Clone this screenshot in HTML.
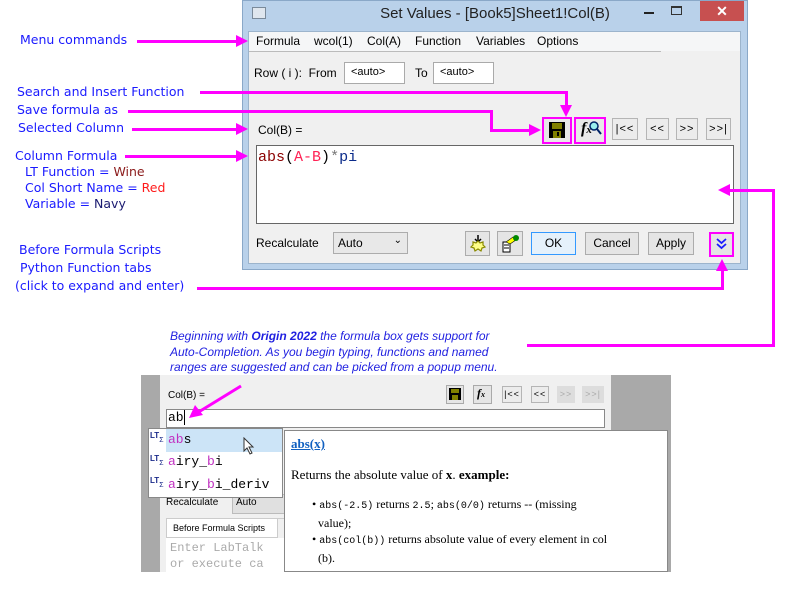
<!DOCTYPE html>
<html><head><meta charset="utf-8"><style>
*{margin:0;padding:0;box-sizing:border-box}
body{width:799px;height:590px;background:#fff;position:relative;overflow:hidden;font-family:"Liberation Sans",sans-serif;font-size:12px;color:#000}
.a{position:absolute}
.lbl{position:absolute;font-family:"DejaVu Sans",Verdana,sans-serif;font-size:12.5px;color:#1a1aff;white-space:nowrap;line-height:14px}
.m{position:absolute;background:#ff00ff}
.btn{position:absolute;background:#e5e5e5;border:1px solid #acacac;text-align:center;font-size:12px;line-height:20px}
.nav{position:absolute;background:#ececec;border:1px solid #b5b5b5;font-family:"Liberation Sans",sans-serif;font-size:11px;text-align:center;line-height:20px;color:#000;letter-spacing:1px}
.mono{font-family:"Liberation Mono",monospace}
.cap{position:absolute;font-style:italic;color:#1f1fe0;font-size:12px;line-height:13px;white-space:nowrap;left:170px}
.tri{position:absolute;width:0;height:0}
</style></head><body>

<!-- main dialog -->
<div class="a" style="left:242px;top:0;width:506px;height:270px;background:#b9d1ea;border:1px solid #8aa8c8"></div>
<div class="a" style="left:252px;top:7px;width:14px;height:12px;background:#dfe6ee;border:1px solid #7a8a9a"></div>
<div class="a" style="left:242px;top:5px;width:506px;text-align:center;font-size:15px;color:#222">Set Values - [Book5]Sheet1!Col(B)</div>
<div class="a" style="left:644px;top:12px;width:10px;height:2px;background:#222"></div>
<div class="a" style="left:671px;top:6px;width:11px;height:9px;border:1px solid #333;border-top-width:2px"></div>
<div class="a" style="left:700px;top:1px;width:44px;height:20px;background:#c75050;color:#fff;text-align:center;font-size:14px;line-height:20px;font-weight:bold">✕</div>
<div class="a" style="left:248px;top:31px;width:493px;height:233px;background:#f0f0f0;border:1px solid #9cb4cc"></div>
<div class="a" style="left:249px;top:32px;width:491px;height:19px;background:#f5f6f7"></div>
<div class="a" style="left:249px;top:51px;width:412px;height:1px;background:#bbb"></div>
<div class="a" style="left:256px;top:34px">Formula</div>
<div class="a" style="left:314px;top:34px">wcol(1)</div>
<div class="a" style="left:367px;top:34px">Col(A)</div>
<div class="a" style="left:415px;top:34px">Function</div>
<div class="a" style="left:476px;top:34px">Variables</div>
<div class="a" style="left:537px;top:34px">Options</div>
<div class="a" style="left:254px;top:66px">Row ( i ):&nbsp; From</div>
<div class="a" style="left:344px;top:62px;width:61px;height:22px;background:#fff;border:1px solid #aaa;padding:3px 0 0 6px;font-size:11px">&lt;auto&gt;</div>
<div class="a" style="left:415px;top:66px">To</div>
<div class="a" style="left:433px;top:62px;width:61px;height:22px;background:#fff;border:1px solid #aaa;padding:3px 0 0 6px;font-size:11px">&lt;auto&gt;</div>
<div class="a" style="left:258px;top:123px">Col(B) =</div>

<!-- save/fx buttons -->
<div class="a" style="left:542px;top:117px;width:30px;height:27px;border:2px solid #ff00ff;background:#e8e8e8"></div>
<svg class="a" style="left:549px;top:122px" width="16" height="16"><rect x="0" y="0" width="16" height="16" fill="#000"/><rect x="3" y="1" width="10" height="6" fill="#808000"/><rect x="4" y="9" width="8" height="7" fill="#808000"/><rect x="8" y="10" width="2" height="4" fill="#000"/></svg>
<div class="a" style="left:574px;top:117px;width:32px;height:27px;border:2px solid #ff00ff;background:#e8e8e8"></div>
<div class="a" style="left:581px;top:120px;font-family:'Liberation Serif',serif;font-style:italic;font-size:16px;font-weight:bold">f<span style="font-size:11px">x</span></div>
<svg class="a" style="left:588px;top:120px" width="14" height="16"><circle cx="6" cy="6" r="4" fill="#9ee" stroke="#026" stroke-width="1.5"/><line x1="9" y1="9" x2="13" y2="14" stroke="#026" stroke-width="2"/></svg>
<div class="nav" style="left:612px;top:118px;width:26px;height:22px">|&lt;&lt;</div>
<div class="nav" style="left:646px;top:118px;width:23px;height:22px">&lt;&lt;</div>
<div class="nav" style="left:676px;top:118px;width:22px;height:22px">&gt;&gt;</div>
<div class="nav" style="left:706px;top:118px;width:25px;height:22px">&gt;&gt;|</div>

<div class="a" style="left:256px;top:145px;width:478px;height:79px;background:#fff;border:1px solid #666"></div>
<div class="a mono" style="left:258px;top:149px;font-size:15px"><span style="color:#8b0000">abs</span>(<span style="color:#ff2255">A-B</span>)<span style="color:#777">*</span><span style="color:#0a2a8a">pi</span></div>

<div class="a" style="left:256px;top:236px">Recalculate</div>
<div class="a" style="left:333px;top:232px;width:75px;height:22px;background:#e8e8e8;border:1px solid #acacac;padding:3px 0 0 4px">Auto<span style="position:absolute;right:5px;top:2px;font-size:10px">&#8964;</span></div>
<div class="btn" style="left:465px;top:231px;width:25px;height:25px"></div>
<svg class="a" style="left:469px;top:234px" width="18" height="18"><path d="M9 1 V8 M6 5 L9 8 L12 5" stroke="#000" stroke-width="1.5" fill="none"/><path d="M9 7 L11 9 L14 8 L14 11 L16 13 L13 14 L12 17 L9 15 L6 17 L5 14 L2 13 L4 11 L4 8 L7 9 Z" fill="#ff8" stroke="#8a8a00" stroke-width="1.2"/></svg>
<div class="btn" style="left:497px;top:231px;width:26px;height:25px"></div>
<svg class="a" style="left:501px;top:234px" width="20" height="20"><rect x="2" y="8" width="7" height="10" fill="#fff" stroke="#000"/><line x1="3" y1="11" x2="8" y2="11" stroke="#000"/><line x1="3" y1="14" x2="8" y2="14" stroke="#000"/><path d="M5 8 L12 3 L15 6 L9 10Z" fill="#ff0" stroke="#000" stroke-width="0.6"/><circle cx="15" cy="4" r="3" fill="#080"/></svg>
<div class="btn" style="left:531px;top:232px;width:45px;height:23px;border-color:#3399ff;background:#e5f1fb">OK</div>
<div class="btn" style="left:585px;top:232px;width:54px;height:23px">Cancel</div>
<div class="btn" style="left:648px;top:232px;width:46px;height:23px">Apply</div>
<div class="a" style="left:709px;top:232px;width:25px;height:25px;border:2px solid #ff00ff;background:#e5e5e5"></div>
<svg class="a" style="left:716px;top:238px" width="11" height="13"><path d="M1 1 L5.5 5 L10 1 M1 6 L5.5 10 L10 6" stroke="#1a1aff" stroke-width="1.8" fill="none"/></svg>

<!-- left labels -->
<div class="lbl" style="left:20px;top:33px">Menu commands</div>
<div class="lbl" style="left:17px;top:85px">Search and Insert Function</div>
<div class="lbl" style="left:17px;top:103px">Save formula as</div>
<div class="lbl" style="left:18px;top:121px">Selected Column</div>
<div class="lbl" style="left:15px;top:149px">Column Formula</div>
<div class="lbl" style="left:25px;top:165px">LT Function = <span style="color:#8b1a1a">Wine</span></div>
<div class="lbl" style="left:25px;top:181px">Col Short Name = <span style="color:#ff1a1a">Red</span></div>
<div class="lbl" style="left:25px;top:197px">Variable = <span style="color:#1a1a70">Navy</span></div>
<div class="lbl" style="left:19px;top:243px">Before Formula Scripts</div>
<div class="lbl" style="left:20px;top:261px">Python Function tabs</div>
<div class="lbl" style="left:15px;top:279px">(click to expand and enter)</div>

<!-- magenta arrows -->
<div class="m" style="left:137px;top:40px;width:100px;height:3px"></div>
<div class="tri" style="left:236px;top:35px;border-left:12px solid #f0f;border-top:6px solid transparent;border-bottom:6px solid transparent"></div>
<div class="m" style="left:200px;top:91px;width:367px;height:3px"></div>
<div class="m" style="left:565px;top:91px;width:3px;height:16px"></div>
<div class="tri" style="left:560px;top:105px;border-top:12px solid #f0f;border-left:6px solid transparent;border-right:6px solid transparent"></div>
<div class="m" style="left:128px;top:110px;width:365px;height:3px"></div>
<div class="m" style="left:490px;top:110px;width:3px;height:22px"></div>
<div class="m" style="left:490px;top:129px;width:40px;height:3px"></div>
<div class="tri" style="left:529px;top:124px;border-left:12px solid #f0f;border-top:6px solid transparent;border-bottom:6px solid transparent"></div>
<div class="m" style="left:132px;top:128px;width:104px;height:3px"></div>
<div class="tri" style="left:236px;top:123px;border-left:12px solid #f0f;border-top:6px solid transparent;border-bottom:6px solid transparent"></div>
<div class="m" style="left:125px;top:155px;width:111px;height:3px"></div>
<div class="tri" style="left:236px;top:150px;border-left:12px solid #f0f;border-top:6px solid transparent;border-bottom:6px solid transparent"></div>
<div class="m" style="left:730px;top:189px;width:45px;height:3px"></div>
<div class="tri" style="left:718px;top:184px;border-right:12px solid #f0f;border-top:6px solid transparent;border-bottom:6px solid transparent"></div>
<div class="m" style="left:772px;top:189px;width:3px;height:158px"></div>
<div class="m" style="left:527px;top:344px;width:248px;height:3px"></div>
<div class="m" style="left:197px;top:287px;width:527px;height:3px"></div>
<div class="m" style="left:721px;top:270px;width:3px;height:20px"></div>
<div class="tri" style="left:716px;top:259px;border-bottom:12px solid #f0f;border-left:6px solid transparent;border-right:6px solid transparent"></div>

<!-- caption -->
<div class="cap" style="top:330px">Beginning with <b>Origin 2022</b> the formula box gets support for</div>
<div class="cap" style="top:346px">Auto-Completion. As you begin typing, functions and named</div>
<div class="cap" style="top:361px">ranges are suggested and can be picked from a popup menu.</div>

<!-- bottom screenshot -->
<div class="a" style="left:141px;top:375px;width:530px;height:197px;background:#a9a9a9"></div>
<div class="a" style="left:160px;top:375px;width:451px;height:197px;background:#f0f0f0"></div>
<div class="a" style="left:168px;top:390px;font-size:10px">Col(B) =</div>
<div class="a" style="left:446px;top:385px;width:18px;height:19px;background:#e5e5e5;border:1px solid #aaa"></div>
<svg class="a" style="left:449px;top:388px" width="12" height="12"><rect width="12" height="12" fill="#000"/><rect x="2" y="1" width="8" height="4" fill="#808000"/><rect x="3" y="7" width="6" height="5" fill="#808000"/></svg>
<div class="a" style="left:473px;top:385px;width:19px;height:19px;background:#e5e5e5;border:1px solid #aaa;font-family:'Liberation Serif',serif;font-style:italic;font-weight:bold;font-size:12px;padding-left:3px">f<span style="font-size:8px">x</span></div>
<div class="nav" style="left:502px;top:386px;width:20px;height:17px;font-size:9px;line-height:15px">|&lt;&lt;</div>
<div class="nav" style="left:531px;top:386px;width:18px;height:17px;font-size:9px;line-height:15px">&lt;&lt;</div>
<div class="nav" style="left:557px;top:386px;width:18px;height:17px;font-size:9px;line-height:15px;color:#aaa;background:#ddd;border-color:#ddd">&gt;&gt;</div>
<div class="nav" style="left:582px;top:386px;width:22px;height:17px;font-size:9px;line-height:15px;color:#aaa;background:#ddd;border-color:#ddd">&gt;&gt;|</div>
<div class="a" style="left:166px;top:409px;width:439px;height:19px;background:#fff;border:1px solid #888"></div>
<div class="a mono" style="left:168px;top:410px;font-size:13px">ab<span style="border-left:1px solid #000"></span></div>
<svg class="a" style="left:185px;top:383px" width="60" height="40"><line x1="56" y1="3" x2="12" y2="30" stroke="#f0f" stroke-width="3"/><polygon points="4,35 10,22 18,32" fill="#f0f"/></svg>
<div class="a" style="left:166px;top:497px;font-size:10px">Recalculate</div>
<div class="a" style="left:232px;top:494px;width:60px;height:20px;background:#e0e0e0;border:1px solid #bbb;font-size:10px;padding:2px 0 0 3px">Auto</div>
<div class="a" style="left:166px;top:518px;width:440px;height:54px;border:1px solid #ccc;background:#f0f0f0"></div>
<div class="a" style="left:166px;top:518px;width:112px;height:20px;background:#fff;border:1px solid #ccc;font-size:9px;padding:4px 0 0 6px">Before Formula Scripts</div>
<div class="a" style="left:166px;top:538px;width:440px;height:34px;background:#fff"></div>
<div class="a mono" style="left:170px;top:540px;font-size:12px;color:#aaa;line-height:16px">Enter LabTalk<br>or execute ca</div>
<!-- autocomplete list -->
<div class="a" style="left:148px;top:428px;width:135px;height:70px;background:#fff;border:1px solid #888"></div>
<div class="a" style="left:166px;top:429px;width:116px;height:23px;background:#cce4f7"></div>
<div class="a" style="left:150px;top:431px;font-size:8px;font-weight:bold;color:#1a2a8a">LT<span style="font-weight:normal;font-size:7px;vertical-align:-4px">Σ</span></div>
<div class="a" style="left:150px;top:454px;font-size:8px;font-weight:bold;color:#1a2a8a">LT<span style="font-weight:normal;font-size:7px;vertical-align:-4px">Σ</span></div>
<div class="a" style="left:150px;top:476px;font-size:8px;font-weight:bold;color:#1a2a8a">LT<span style="font-weight:normal;font-size:7px;vertical-align:-4px">Σ</span></div>
<div class="a mono" style="left:168px;top:432px;font-size:13px"><span style="color:#c030c0">ab</span>s</div>
<div class="a mono" style="left:168px;top:454px;font-size:13px"><span style="color:#c030c0">a</span>iry_<span style="color:#c030c0">b</span>i</div>
<div class="a mono" style="left:168px;top:477px;font-size:13px"><span style="color:#c030c0">a</span>iry_<span style="color:#c030c0">b</span>i_deriv</div>
<svg class="a" style="left:243px;top:437px" width="12" height="18"><path d="M1 1 L1 14 L4 11 L7 17 L9 16 L6 10 L10 10 Z" fill="#fff" stroke="#333"/></svg>
<!-- popup -->
<div class="a" style="left:284px;top:430px;width:384px;height:142px;background:#fff;border:1px solid #888"></div>
<div class="a" style="left:291px;top:436px;font-family:'Liberation Serif',serif;font-size:13px;font-weight:bold;color:#1060c0;text-decoration:underline">abs(x)</div>
<div class="a" style="left:291px;top:467px;font-family:'Liberation Serif',serif;font-size:13px">Returns the absolute value of <b>x</b>. <b>example:</b></div>
<div class="a" style="left:312px;top:496px;width:350px;font-family:'Liberation Serif',serif;font-size:12px;line-height:16px">• <span class="mono" style="font-size:10px">abs(-2.5)</span> returns <span class="mono" style="font-size:10px">2.5</span>; <span class="mono" style="font-size:10px">abs(0/0)</span> returns -- (missing<br>&nbsp;&nbsp;value);<br>• <span class="mono" style="font-size:10px">abs(col(b))</span> returns absolute value of every element in col<br>&nbsp;&nbsp;(b).</div>
</body></html>
